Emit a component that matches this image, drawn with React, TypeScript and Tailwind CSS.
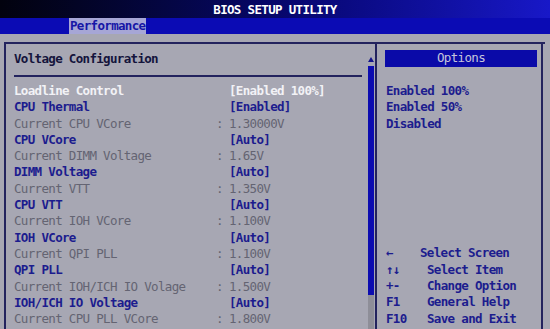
import React from "react";

type Row = { label: string; value: string; kind: "sel" | "opt" | "info" };

const rows: Row[] = [
  { label: "Loadline Control", value: "[Enabled 100%]", kind: "sel" },
  { label: "CPU Thermal", value: "[Enabled]", kind: "opt" },
  { label: "Current CPU VCore", value: "1.30000V", kind: "info" },
  { label: "CPU VCore", value: "[Auto]", kind: "opt" },
  { label: "Current DIMM Voltage", value: "1.65V", kind: "info" },
  { label: "DIMM Voltage", value: "[Auto]", kind: "opt" },
  { label: "Current VTT", value: "1.350V", kind: "info" },
  { label: "CPU VTT", value: "[Auto]", kind: "opt" },
  { label: "Current IOH VCore", value: "1.100V", kind: "info" },
  { label: "IOH VCore", value: "[Auto]", kind: "opt" },
  { label: "Current QPI PLL", value: "1.100V", kind: "info" },
  { label: "QPI PLL", value: "[Auto]", kind: "opt" },
  { label: "Current IOH/ICH IO Volage", value: "1.500V", kind: "info" },
  { label: "IOH/ICH IO Voltage", value: "[Auto]", kind: "opt" },
  { label: "Current CPU PLL VCore", value: "1.800V", kind: "info" },
];

const help = [
  { key: "←", text: "Select Screen", first: true },
  { key: "↑↓", text: "Select Item" },
  { key: "+-", text: "Change Option" },
  { key: "F1", text: "General Help" },
  { key: "F10", text: "Save and Exit" },
];

const colour = {
  sel: "text-[#f2f2f6] font-bold",
  opt: "text-[#1c1c8e] font-bold",
  info: "text-[#646472]",
};

const App = () => {
  return (
    <div
      className="w-[550px] h-[329px] overflow-hidden flex flex-col bg-[#a7a7b3] text-[12.5px] tracking-[-0.67px] leading-[16.3px]"
      style={{ fontFamily: '"DejaVu Sans Mono", "Liberation Mono", monospace' }}
    >
      {/* title bar */}
      <div className="h-[18px] shrink-0 flex items-center justify-center pt-[2px] bg-gradient-to-r from-[#02020e] via-[#06066a] to-[#1818c8] text-white font-bold">
        BIOS SETUP UTILITY
      </div>

      {/* menu bar */}
      <div className="h-[16px] shrink-0 bg-[#0b0bb4] pl-[69px] flex items-stretch">
        <div className="bg-[#a6a6d6] text-[#1616a6] font-bold px-[1px] flex items-center">
          Performance
        </div>
      </div>

      {/* frame */}
      <div className="flex-1 pt-[8px] pl-[4px] pr-[5px] flex min-h-0">
        <div className="flex-1 flex border-t-2 border-[#23235e]">
          {/* left panel */}
          <div className="w-[371px] border-l-2 border-[#23235e] flex">
            <div className="w-[356px] pl-[8px] flex flex-col">
              <div className="h-[31px] pt-[7px] text-[#14143c] font-bold">
                Voltage Configuration
              </div>
              <div className="h-[2px] bg-[#23235e]" />
              <div className="mt-[6px] flex flex-col">
                {rows.map((r) => (
                  <div key={r.label} className={`grid grid-cols-[202px_13px_1fr] h-[16.3px] ${colour[r.kind]}`}>
                    <span className="whitespace-pre">{r.label}</span>
                    <span>{r.kind === "info" ? ":" : ""}</span>
                    <span className="whitespace-pre">{r.value}</span>
                  </div>
                ))}
              </div>
            </div>
            {/* scrollbar */}
            <div className="ml-[6px] w-[6px] flex flex-col pt-[13px]">
              <svg width="6" height="5" viewBox="0 0 6 5">
                <polygon points="3,0 6,5 0,5" fill="#14148a" />
              </svg>
              <div className="mt-[4px] h-[229px] bg-[#0c0cb0]" />
              <div className="flex-1 bg-[#8e8e98]" />
            </div>
          </div>

          {/* right panel */}
          <div className="w-[168px] border-l-2 border-r-2 border-[#23235e] flex flex-col">
            <div className="mt-[6px] ml-[8px] w-[152px] h-[17px] bg-[#0a0aa8] text-[#c6c6dc] flex items-center justify-center">
              Options
            </div>
            <div className="mt-[16px] pl-[9px] flex flex-col text-[#1c1c8e] font-bold">
              <div className="h-[16.3px]">Enabled 100%</div>
              <div className="h-[16.3px]">Enabled 50%</div>
              <div className="h-[16.3px]">Disabled</div>
            </div>
            <div className="mt-[113.5px] pl-[9px] flex flex-col text-[#1c1c8e] font-bold">
              {help.map((h) => (
                <div key={h.key} className="grid grid-cols-[41px_1fr] h-[16.3px]">
                  <span>{h.key}</span>
                  <span className={h.first ? "-ml-[7px]" : ""}>{h.text}</span>
                </div>
              ))}
            </div>
          </div>
        </div>
      </div>
    </div>
  );
};

export default App;
